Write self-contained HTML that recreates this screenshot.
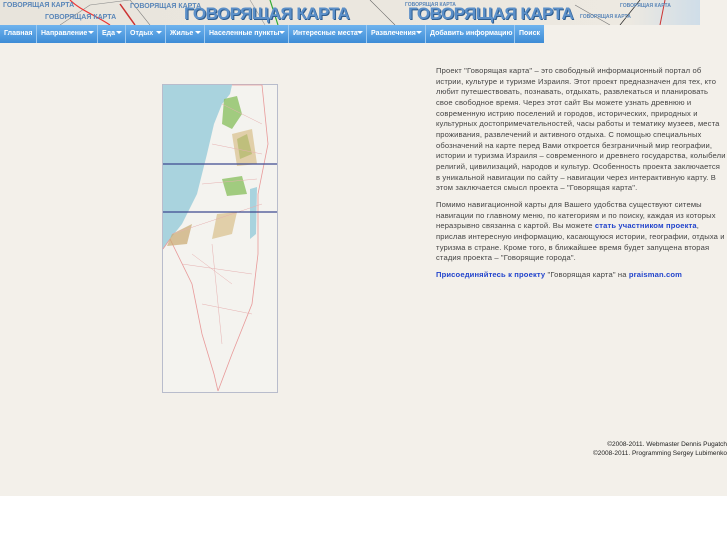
<!DOCTYPE html>
<html><head><meta charset="utf-8"><style>
body{margin:0;width:727px;height:545px;background:#fff;font-family:"Liberation Sans",sans-serif;overflow:hidden;position:relative}
#bg{position:absolute;left:0;top:0;width:727px;height:496px;background:#f3f0ea}
#hdr{position:absolute;left:0;top:0;width:700px;height:25px;background:linear-gradient(90deg,#e8e4dc,#ede9e1 90%,#cfdde8);overflow:hidden}
.t{position:absolute;font-weight:bold;color:#5b8fc8;font-size:17px;top:4px;letter-spacing:-0.5px;text-shadow:1px 1px 0 #2e5d8f}
.s{position:absolute;font-size:7px;color:#5a86b8;font-weight:bold;white-space:nowrap}
#menu{position:absolute;left:0;top:25px;height:18px;display:flex}
#menu div{height:18px;line-height:18px;font-size:7px;color:#fff;font-weight:bold;background:linear-gradient(#6fb3ee,#3d8cd6);border-right:1px solid #9fcaf0;box-sizing:border-box;padding-left:4px;position:relative;white-space:nowrap;overflow:hidden}
#menu div.d:after{content:"";position:absolute;right:3px;top:6px;border:3px solid transparent;border-top:3px solid #fff}
#txt{position:absolute;left:436px;top:66px;width:290px;font-size:7.6px;line-height:10.65px;color:#444;letter-spacing:0.14px}
#txt p{margin:0 0 6px}
a{color:#2244cc;font-weight:bold;text-decoration:none}
#ft{position:absolute;right:0;top:440px;text-align:right;font-size:6.5px;line-height:9px;color:#222}
</style></head><body>
<div id="bg"></div>
<div id="hdr">
<svg width="700" height="25" style="position:absolute;left:0;top:0">
<path d="M60 25 L90 5 L130 0" stroke="#888" fill="none" stroke-width="0.6"/>
<path d="M70 0 C80 10 95 15 110 25" stroke="#e33" fill="none" stroke-width="1.2"/>
<path d="M130 0 L150 25" stroke="#777" fill="none" stroke-width="0.6"/>
<path d="M120 4 L135 25" stroke="#c33" fill="none" stroke-width="1.5"/>
<path d="M250 0 L265 25" stroke="#999" fill="none" stroke-width="0.6"/>
<path d="M270 0 L278 25" stroke="#3a3" fill="none" stroke-width="1.2"/>
<path d="M370 0 L395 25" stroke="#666" fill="none" stroke-width="0.6"/>
<path d="M575 5 L610 25" stroke="#777" fill="none" stroke-width="0.6"/>
<path d="M640 0 L620 25" stroke="#333" fill="none" stroke-width="0.8"/>
<path d="M665 0 L660 25" stroke="#c33" fill="none" stroke-width="1"/>
</svg>
<div class="s" style="left:3px;top:2px">ГОВОРЯЩАЯ КАРТА</div>
<div class="s" style="left:45px;top:14px">ГОВОРЯЩАЯ КАРТА</div>
<div class="s" style="left:130px;top:3px">ГОВОРЯЩАЯ КАРТА</div>
<div class="t" style="left:184px">ГОВОРЯЩАЯ КАРТА</div>
<div class="t" style="left:408px">ГОВОРЯЩАЯ КАРТА</div>
<div class="s" style="left:405px;top:2px;font-size:5px">ГОВОРЯЩАЯ КАРТА</div>
<div class="s" style="left:580px;top:14px;font-size:5px">ГОВОРЯЩАЯ КАРТА</div>
<div class="s" style="left:620px;top:3px;font-size:5px">ГОВОРЯЩАЯ КАРТА</div>
</div>
<div id="menu">
<div style="width:37px">Главная</div>
<div class="d" style="width:61px">Направление</div>
<div class="d" style="width:28px">Еда</div>
<div class="d" style="width:40px">Отдых</div>
<div class="d" style="width:39px">Жилье</div>
<div class="d" style="width:84px">Населенные пункты</div>
<div class="d" style="width:78px">Интересные места</div>
<div class="d" style="width:59px">Развлечения</div>
<div style="width:89px">Добавить информацию</div>
<div style="width:29px;border:0">Поиск</div>
</div>
<svg style="position:absolute;left:162px;top:84px" width="116" height="309" viewBox="0 0 116 309">
<rect x="0.5" y="0.5" width="115" height="308" fill="#f4f3ef" stroke="#b8bccc"/>
<path d="M1 1 L70 1 L68 10 L60 20 L52 40 L45 70 L35 110 L20 140 L8 155 L1 165 Z" fill="#a9d3de"/>
<path d="M1 165 L8 155 L30 200 L40 250 L52 290 L56 307" fill="none" stroke="#e89a9a" stroke-width="0.8"/>
<path d="M70 1 L100 1 L106 60 L96 110 L96 170 L90 220 L70 270 L56 307" fill="none" stroke="#e89a9a" stroke-width="0.8"/>
<path d="M62 15 L75 12 L80 30 L70 45 L60 40 Z M75 55 L85 50 L90 70 L78 75 Z M60 95 L80 92 L85 110 L65 112 Z" fill="#8cc063" opacity="0.8"/>
<path d="M70 50 L90 45 L95 80 L75 82 Z M55 130 L75 128 L70 150 L50 155 Z" fill="#d4b779" opacity="0.6"/>
<path d="M10 150 L30 140 L25 160 L5 162 Z" fill="#c9a870" opacity="0.7"/>
<path d="M88 105 L95 103 L94 150 L88 155 Z" fill="#a9d3de"/>
<path d="M30 170 L70 200 M50 160 L60 260 M20 180 L90 190 M40 220 L90 230 M10 150 L100 120 M60 20 L100 40 M50 60 L100 70 M40 100 L95 95" stroke="#e6b0b0" stroke-width="0.5" fill="none"/>
<line x1="1" y1="80" x2="115" y2="80" stroke="#3f4a90" stroke-width="1.2"/>
<line x1="1" y1="128" x2="115" y2="128" stroke="#3f4a90" stroke-width="1.2"/>
</svg>
<div id="txt">
<p>Проект "Говорящая карта" – это свободный информационный портал об истрии, культуре и туризме Израиля. Этот проект предназначен для тех, кто любит путешествовать, познавать, отдыхать, развлекаться и планировать свое свободное время. Через этот сайт Вы можете узнать древнюю и современную истрию поселений и городов, исторических, природных и культурных достопримечательностей, часы работы и тематику музеев, места проживания, развлечений и активного отдыха. С помощью специальных обозначений на карте перед Вами откроется безграничный мир географии, истории и туризма Израиля – современного и древнего государства, колыбели религий, цивилизаций, народов и культур. Особенность проекта заключается в уникальной навигации по сайту – навигации через интерактивную карту. В этом заключается смысл проекта – "Говорящая карта".</p>
<p>Помимо навигационной карты для Вашего удобства существуют ситемы навигации по главному меню, по категориям и по поиску, каждая из которых неразрывно связанна с картой. Вы можете <a>стать участником проекта</a>, прислав интересную информацию, касающуюся истории, географии, отдыха и туризма в стране. Кроме того, в ближайшее время будет запущена вторая стадия проекта – "Говорящие города".</p>
<p><a>Присоединяйтесь к проекту</a> "Говорящая карта" на <a>praisman.com</a></p>
</div>
<div id="ft">©2008-2011. Webmaster Dennis Pugatch<br>©2008-2011. Programming Sergey Lubimenko</div>
</body></html>
